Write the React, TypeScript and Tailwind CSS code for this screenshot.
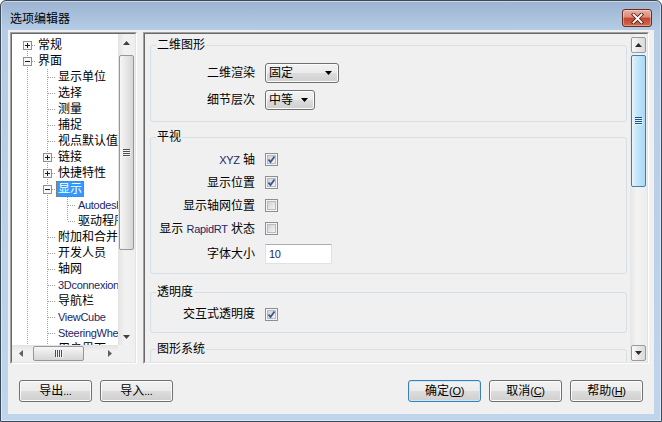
import React from "react";

type Item = {
  t: React.ReactNode;
  level: number;
  box?: "plus" | "minus";
  sel?: boolean;
  first?: boolean;
  last?: boolean;
};

function Lat({ children }: { children: React.ReactNode }) {
  return <span className="text-[11px] tracking-[-0.3px] text-[#1c2766]">{children}</span>;
}

function LatB({ children }: { children: React.ReactNode }) {
  return <span className="text-[11px] tracking-[-0.3px]">{children}</span>;
}

const items: Item[] = [
  { t: "常规", level: 0, box: "plus", first: true },
  { t: "界面", level: 0, box: "minus" },
  { t: "显示单位", level: 1 },
  { t: "选择", level: 1 },
  { t: "测量", level: 1 },
  { t: "捕捉", level: 1 },
  { t: "视点默认值", level: 1 },
  { t: "链接", level: 1, box: "plus" },
  { t: "快捷特性", level: 1, box: "plus" },
  { t: "显示", level: 1, box: "minus", sel: true },
  { t: <Lat>Autodesk</Lat>, level: 2 },
  { t: "驱动程序", level: 2, last: true },
  { t: "附加和合并", level: 1 },
  { t: "开发人员", level: 1 },
  { t: "轴网", level: 1 },
  { t: <Lat>3Dconnexion</Lat>, level: 1 },
  { t: "导航栏", level: 1 },
  { t: <Lat>ViewCube</Lat>, level: 1 },
  { t: <Lat>SteeringWheels</Lat>, level: 1 },
  { t: "用户界面", level: 1 },
  { t: "工具", level: 1 },
];

function TreeRow({ it }: { it: Item }) {
  const w = 20 * it.level + 24;
  const lines: React.ReactNode[] = [];
  for (let c = 0; c <= it.level; c++) {
    const x = 15 + 20 * c + 0.5;
    let y1 = 0;
    let y2 = 16;
    if (c === it.level) {
      if (it.first) y1 = 8;
      if (it.last) y2 = 8;
    }
    lines.push(
      <line key={c} x1={x} x2={x} y1={y1} y2={y2} stroke="#a0a0a0" strokeDasharray="1 1" />
    );
  }
  const cx = 15 + 20 * it.level;
  const hx1 = it.box ? cx + 5 : cx + 1;
  return (
    <div className="flex h-[16px] items-center whitespace-nowrap">
      <svg width={w} height={16} className="shrink-0">
        {lines}
        <line x1={hx1} x2={w} y1={8.5} y2={8.5} stroke="#a0a0a0" strokeDasharray="1 1" />
        {it.box && (
          <g>
            <rect x={cx - 3.5} y={4.5} width={8} height={8} fill="#f7f7f7" stroke="#8f8f8f" />
            <line x1={cx - 2} x2={cx + 3} y1={8.5} y2={8.5} stroke="#1a1a1a" />
            {it.box === "plus" && (
              <line x1={cx + 0.5} x2={cx + 0.5} y1={6} y2={11} stroke="#1a1a1a" />
            )}
          </g>
        )}
      </svg>
      <span
        className={
          it.sel
            ? "h-[16px] leading-[14px] px-[1px] border border-dotted border-[#cc6600] bg-[#3399ff] text-white"
            : "h-[16px] leading-[14px] px-[1px] border border-transparent"
        }
      >
        {it.t}
      </span>
    </div>
  );
}

function Tri({ dir, color = "#404040" }: { dir: "up" | "down" | "left" | "right"; color?: string }) {
  const p = {
    up: "M0 4 L3.5 0 L7 4 Z",
    down: "M0 0 L7 0 L3.5 4 Z",
    left: "M4 0 L4 7 L0 3.5 Z",
    right: "M0 0 L4 3.5 L0 7 Z",
  }[dir];
  const vert = dir === "up" || dir === "down";
  return (
    <svg width={vert ? 7 : 4} height={vert ? 4 : 7} viewBox={vert ? "0 0 7 4" : "0 0 4 7"}>
      <path d={p} fill={color} />
    </svg>
  );
}

function GripH({ color = "#4f4f4f" }: { color?: string }) {
  return (
    <svg width="8" height="8" viewBox="0 0 8 8">
      <path d="M0 0.5H7M0 2.5H7M0 4.5H7M0 6.5H7" stroke={color} />
      <path d="M1 1.5H8M1 3.5H8M1 5.5H8M1 7.5H8" stroke="#ffffff" strokeOpacity="0.6" />
    </svg>
  );
}

function GripV() {
  return (
    <svg width="8" height="8" viewBox="0 0 8 8">
      <path d="M0.5 0V7M2.5 0V7M4.5 0V7M6.5 0V7" stroke="#4f4f4f" />
      <path d="M1.5 1V8M3.5 1V8M5.5 1V8M7.5 1V8" stroke="#ffffff" strokeOpacity="0.6" />
    </svg>
  );
}

function TreePanel() {
  return (
    <div className="w-[127px] h-[332px] shrink-0 border border-t-[#a0a0a0] border-l-[#a0a0a0] border-r-white border-b-white">
      <div className="h-full border border-t-[#696969] border-l-[#696969] border-r-[#e3e3e3] border-b-[#e3e3e3] bg-white flex flex-col">
        <div className="flex flex-1 min-h-0">
          <div className="flex-1 overflow-hidden pt-[3px]">
            {items.map((it, i) => (
              <TreeRow key={i} it={it} />
            ))}
          </div>
          <div className="w-[17px] flex flex-col bg-[linear-gradient(to_right,#e3e3e3,#f2f2f2_40%,#eeeeee)]">
            <div className="h-[17px] flex items-center justify-center">
              <Tri dir="up" />
            </div>
            <div className="flex-1">
              <div className="mt-[4px] mx-auto w-[15px] h-[195px] rounded-[2px] border border-[#979797] bg-[linear-gradient(to_right,#f6f6f6,#e6e6e6_50%,#d6d6d6)] flex items-center justify-center">
                <GripH />
              </div>
            </div>
            <div className="h-[17px] flex items-center justify-center">
              <Tri dir="down" />
            </div>
          </div>
        </div>
        <div className="flex h-[17px]">
          <div className="flex-1 flex bg-[linear-gradient(to_bottom,#e3e3e3,#f2f2f2_40%,#eeeeee)]">
            <div className="w-[17px] flex items-center justify-center">
              <Tri dir="left" color="#606060" />
            </div>
            <div className="flex-1 flex items-center">
              <div className="ml-[4px] w-[51px] h-[15px] rounded-[2px] border border-[#979797] bg-[linear-gradient(to_bottom,#f6f6f6,#e6e6e6_50%,#d6d6d6)] flex items-center justify-center">
                <GripV />
              </div>
            </div>
            <div className="w-[17px] flex items-center justify-center">
              <Tri dir="right" color="#606060" />
            </div>
          </div>
          <div className="w-[17px] bg-[#f0f0f0]" />
        </div>
      </div>
    </div>
  );
}

function Check({ on }: { on?: boolean }) {
  return (
    <div className="w-[13px] h-[13px] border border-[#8e8f8f] bg-[#f4f4f4] p-[1px] shrink-0">
      <div className="w-full h-full border border-[#b8bcc2] bg-[linear-gradient(135deg,#cfd2d6,#f4f4f4)] relative">
        {on && (
          <svg width="11" height="11" viewBox="0 0 11 11" className="absolute left-[-2px] top-[-2px]">
            <path d="M2.5 5.5 L4.5 8 L8.5 2.5" stroke="#3a5596" strokeWidth="1.8" fill="none" />
          </svg>
        )}
      </div>
    </div>
  );
}

function Combo({ text, wide }: { text: string; wide?: boolean }) {
  return (
    <div
      className={
        (wide ? "w-[74px] " : "w-[50px] ") +
        "h-[20px] rounded-[3px] border border-[#707070] bg-[linear-gradient(to_bottom,#f2f2f2_0%,#ebebeb_50%,#dddddd_50%,#cfcfcf_100%)] shadow-[inset_0_0_0_1px_#fcfcfc] flex items-center pl-[3px] pr-[6px]"
      }
    >
      <span>{text}</span>
      <span className="ml-auto flex">
        <Tri dir="down" color="#000" />
      </span>
    </div>
  );
}

function Row({ label, children, h }: { label: React.ReactNode; children: React.ReactNode; h: string }) {
  return (
    <div className={"flex items-center " + h}>
      <div className="w-[104px] text-right whitespace-nowrap">{label}</div>
      <div className="ml-[10px] flex items-center">{children}</div>
    </div>
  );
}

function RightPanel() {
  return (
    <div className="w-[506px] h-[332px] shrink-0 border border-t-[#a0a0a0] border-l-[#a0a0a0] border-r-white border-b-white">
      <div className="h-full border border-t-[#696969] border-l-[#696969] border-r-[#e3e3e3] border-b-[#e3e3e3] bg-[#f0f0f0] flex">
        <div className="flex-1 overflow-hidden pl-[5px] pr-[3px]">
          <fieldset className="mt-[4px] border border-[#d5dfe5] rounded-[3px] pb-[11px]">
            <legend className="ml-[5px] px-[1px] leading-[14px]">二维图形</legend>
            <div className="pt-[11px] flex flex-col gap-[7px]">
              <Row label="二维渲染" h="h-[20px]">
                <Combo text="固定" wide />
              </Row>
              <Row label="细节层次" h="h-[20px]">
                <Combo text="中等" />
              </Row>
            </div>
          </fieldset>

          <fieldset className="mt-[8px] border border-[#d5dfe5] rounded-[3px] pb-[9px]">
            <legend className="ml-[5px] px-[1px] leading-[14px]">平视</legend>
            <div className="pt-[4px] flex flex-col">
              <Row
                label={
                  <>
                    <Lat>XYZ</Lat> 轴
                  </>
                }
                h="h-[23px]"
              >
                <Check on />
              </Row>
              <Row label="显示位置" h="h-[23px]">
                <Check on />
              </Row>
              <Row label="显示轴网位置" h="h-[23px]">
                <Check />
              </Row>
              <Row
                label={
                  <>
                    显示 <Lat>RapidRT</Lat> 状态
                  </>
                }
                h="h-[23px]"
              >
                <Check />
              </Row>
              <div className="mt-[4px]">
                <Row label="字体大小" h="h-[20px]">
                  <div className="w-[67px] h-[20px] bg-white border border-[#dde2e8] border-t-[#abadb3] flex items-center pl-[3px]">
                    <Lat>10</Lat>
                  </div>
                </Row>
              </div>
            </div>
          </fieldset>

          <fieldset className="mt-[11px] border border-[#d5dfe5] rounded-[3px] pb-[8px]">
            <legend className="ml-[5px] px-[1px] leading-[14px]">透明度</legend>
            <div className="pt-[5px]">
              <Row label="交互式透明度" h="h-[20px]">
                <Check on />
              </Row>
            </div>
          </fieldset>

          <fieldset className="mt-[9px] border border-[#d5dfe5] rounded-[3px] pb-[8px]">
            <legend className="ml-[5px] px-[1px] leading-[14px]">图形系统</legend>
            <div className="h-[60px]" />
          </fieldset>
        </div>

        <div className="w-[17px] flex flex-col bg-[linear-gradient(to_right,#e6e6e6,#f3f3f3_40%,#ededed)] px-[1px]">
          <div className="pt-[3px]">
            <div className="h-[16px] w-[15px] rounded-[2px] border border-[#9a9a9a] bg-[linear-gradient(to_right,#fafafa,#e8e8e8_50%,#dadada)] flex items-center justify-center">
              <Tri dir="up" color="#2c2c2c" />
            </div>
          </div>
          <div className="flex-1">
            <div className="mt-[2px] w-[15px] h-[132px] rounded-[2px] border border-[#3c7fb1] bg-[linear-gradient(to_right,#e6f5fd,#c4e6f9_40%,#a9d9f4)] flex items-center justify-center">
              <GripH color="#1b5382" />
            </div>
          </div>
          <div className="pb-[1px]">
            <div className="h-[16px] w-[15px] rounded-[2px] border border-[#9a9a9a] bg-[linear-gradient(to_right,#fafafa,#e8e8e8_50%,#dadada)] flex items-center justify-center">
              <Tri dir="down" color="#2c2c2c" />
            </div>
          </div>
        </div>
      </div>
    </div>
  );
}

function Btn({ children, def, className = "" }: { children: React.ReactNode; def?: boolean; className?: string }) {
  return (
    <div
      className={
        (def
          ? "border-[#3c7fb1] shadow-[inset_0_0_0_1px_#c6e8fb] "
          : "border-[#707070] shadow-[inset_0_0_0_1px_#fcfcfc] ") +
        "w-[73px] h-[22px] rounded-[3px] border flex items-center justify-center bg-[linear-gradient(to_bottom,#f2f2f2_0%,#ebebeb_50%,#dddddd_50%,#cfcfcf_100%)] " +
        className
      }
    >
      {children}
    </div>
  );
}

export default function App() {
  return (
    <div className="w-[662px] h-[422px] bg-white font-['Liberation_Sans','Noto_Sans_CJK_SC',sans-serif] text-[12px] leading-[14px] text-black">
      <div className="w-[662px] h-[422px] flex flex-col rounded-t-[6px] border border-[#3c4a5a] bg-[linear-gradient(to_bottom,#9cb4d1_0px,#b5cce6_29px,#bfd5ec_100%)] shadow-[inset_0_0_0_1px_rgba(255,255,255,0.45)]">
        <div className="h-[29px] flex items-start shrink-0">
          <div className="pl-[9px] pt-[11px]">选项编辑器</div>
          <div className="ml-auto mr-[9px] mt-[8px] w-[30px] h-[18px] rounded-[3px] border border-[#6a2a20] bg-[linear-gradient(to_bottom,#eab0a2_0%,#dc8a76_45%,#c5452c_50%,#cf6a4f_100%)] shadow-[inset_0_0_0_1px_rgba(255,255,255,0.35)] flex items-center justify-center">
            <svg width="13" height="11" viewBox="0 0 13 11">
              <path d="M2.5 1.5 L10.5 9.5 M10.5 1.5 L2.5 9.5" stroke="#5a2018" strokeWidth="3.6" strokeLinecap="square" />
              <path d="M2.5 1.5 L10.5 9.5 M10.5 1.5 L2.5 9.5" stroke="#ffffff" strokeWidth="1.8" strokeLinecap="square" />
            </svg>
          </div>
        </div>
        <div className="mx-[7px] h-[384px] bg-[#f0f0f0] flex flex-col">
          <div className="flex pl-[2px] pt-[2px] gap-[6px]">
            <TreePanel />
            <RightPanel />
          </div>
          <div className="flex mt-[16px] px-[11px] gap-[8px]">
            <Btn>
              导出<LatB>...</LatB>
            </Btn>
            <Btn>
              导入<LatB>...</LatB>
            </Btn>
            <Btn def className="ml-auto">
              确定
              <LatB>
                (<u>O</u>)
              </LatB>
            </Btn>
            <Btn>
              取消
              <LatB>
                (<u>C</u>)
              </LatB>
            </Btn>
            <Btn>
              帮助
              <LatB>
                (<u>H</u>)
              </LatB>
            </Btn>
          </div>
        </div>
      </div>
    </div>
  );
}
